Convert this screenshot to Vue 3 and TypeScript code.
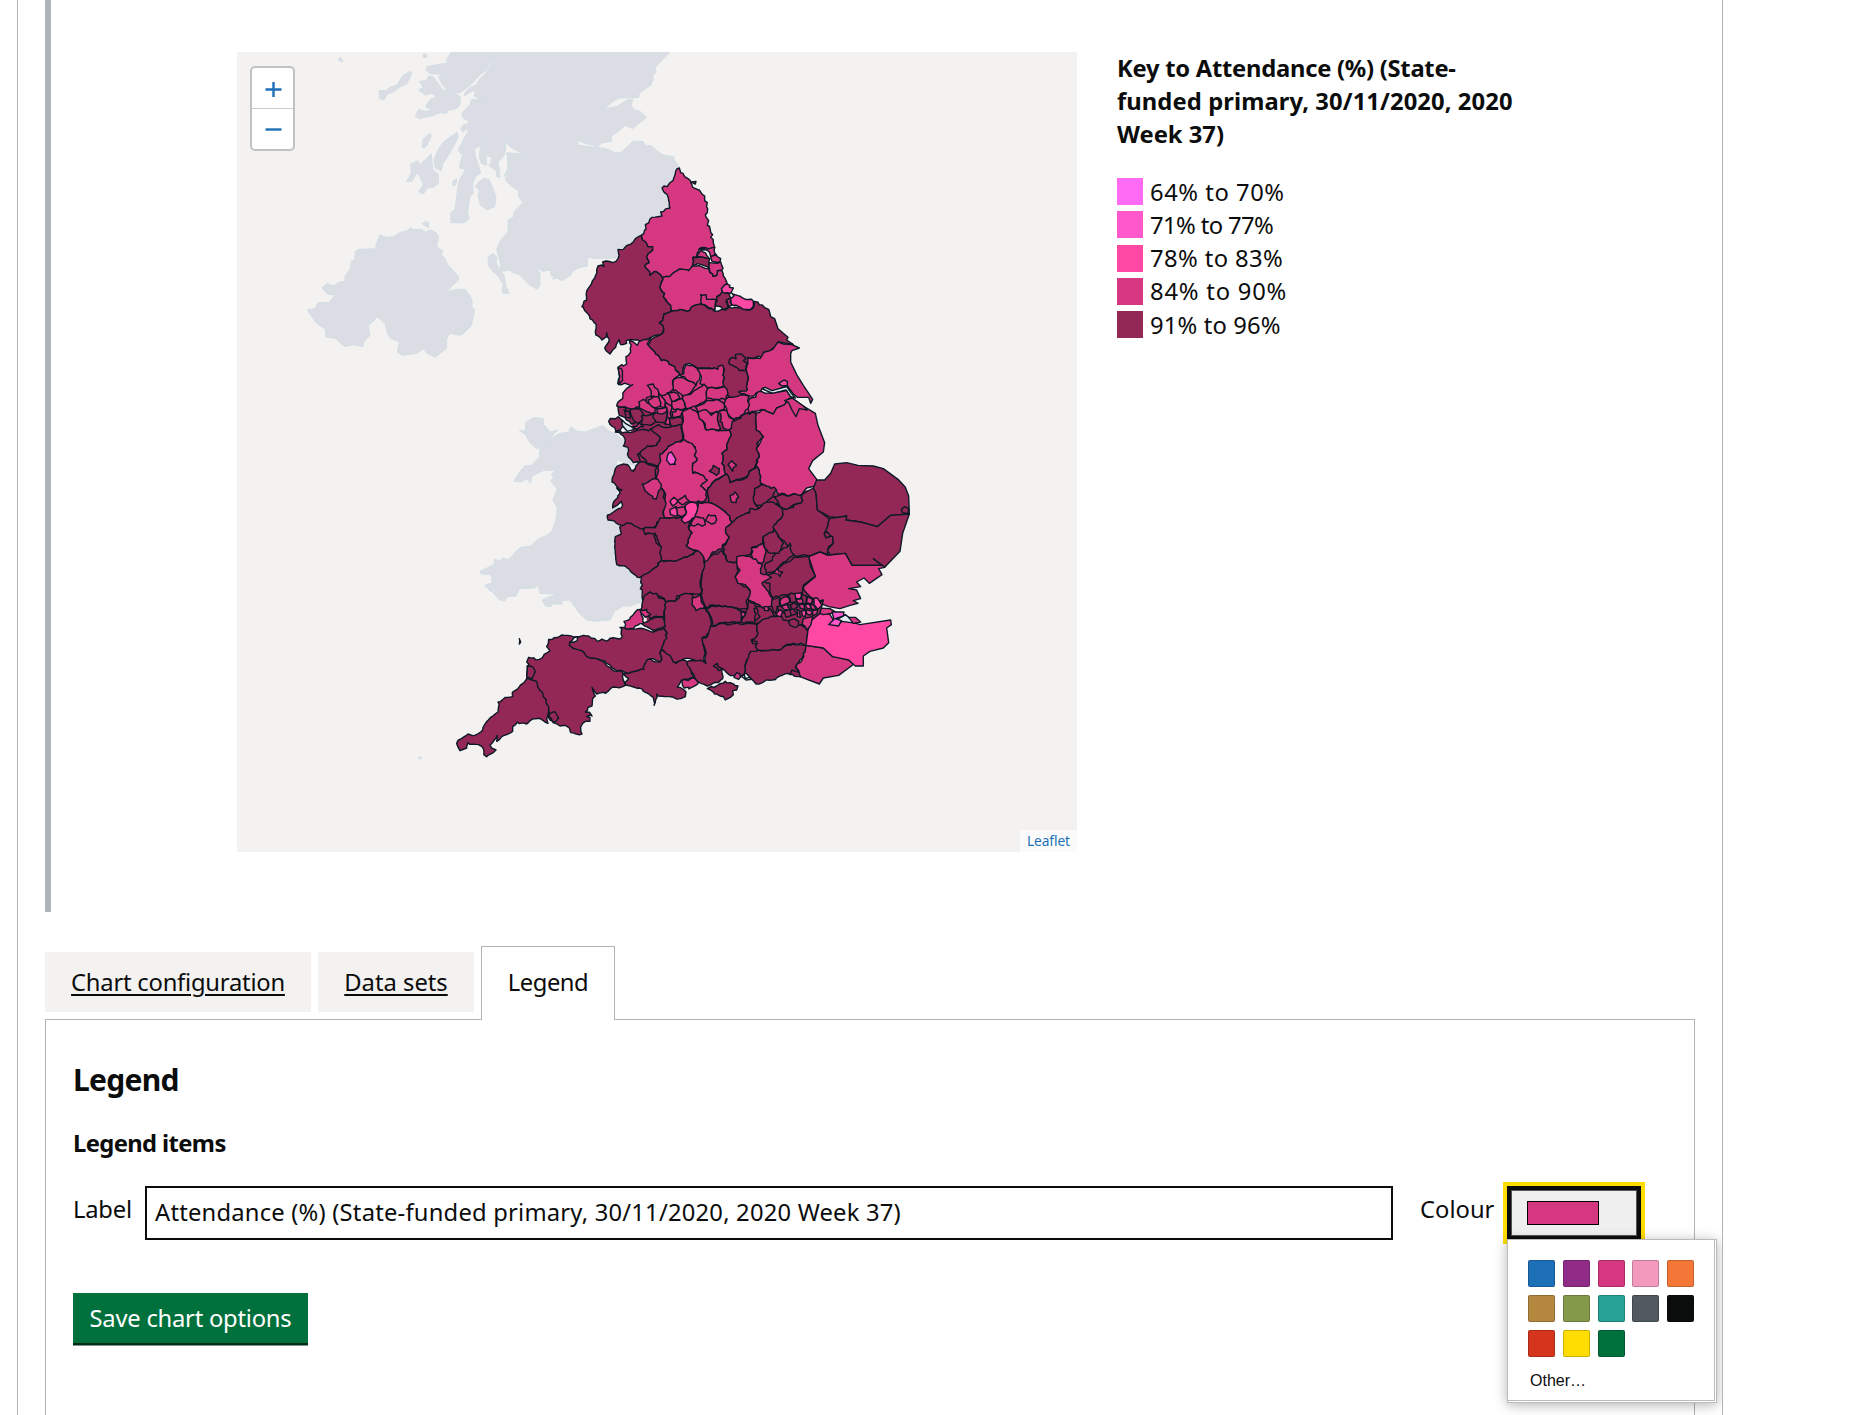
<script setup lang="ts">
import { ref } from 'vue'

type Frame = 'A' | 'B' | 'C' | 'D' | 'E' | 'F'
type Tone = 'd' | 'p' | 'h' | 'm' | 'w' | 'ud' | 'up'

/* Each map sheet is digitised at three units per pixel from its own corner. */
const origin: Record<Frame, [number, number]> = {
  A: [230, 40],
  B: [560, 150],
  C: [590, 330],
  D: [590, 440],
  E: [440, 580],
  F: [470, 400],
}
const place = (f: Frame) => `translate(${origin[f][0]} ${origin[f][1]}) scale(0.33333)`

const land: [Frame, string][] = [
  ['A', '668,30 650,58 652,70 620,74 590,80 588,92 602,101 640,104 625,110 634,128 648,148 668,152 686,160 700,152 724,132 738,118 750,104 770,90 778,70 790,50 778,84 768,98 748,118 740,134 720,142 704,160 702,168 728,152 736,155 732,168 748,176 766,178 740,178 722,180 720,196 708,206 696,220 700,236 712,240 718,250 700,254 692,268 700,276 712,264 714,276 704,290 694,312 685,328 692,342 700,336 694,356 688,384 706,386 700,400 688,420 682,450 676,506 662,518 663,548 702,549 717,536 713,514 720,470 730,460 728,430 738,408 752,400 744,370 736,350 734,326 750,318 756,302 750,330 748,350 754,370 770,376 768,346 786,352 782,368 776,376 800,394 800,410 810,412 808,388 804,366 820,350 826,332 826,300 834,314 848,326 862,332 878,342 850,340 830,338 832,352 834,386 830,410 826,420 846,440 866,452 866,468 878,488 852,516 850,532 834,540 834,576 812,600 800,628 810,664 812,694 838,690 852,700 866,702 900,736 922,748 930,736 930,700 916,682 938,694 962,690 962,704 972,712 968,718 980,714 996,722 1022,706 1028,694 1046,684 1072,678 1074,652 1098,656 1165,654 1240,600 1330,500 1320,440 1350,384 1334,362 1330,350 1296,344 1262,316 1246,318 1240,304 1208,304 1196,316 1172,338 1154,338 1134,328 1112,324 1046,316 1040,302 1060,308 1102,320 1118,308 1146,304 1144,290 1186,256 1208,266 1250,232 1230,214 1210,208 1204,196 1208,176 1190,180 1160,200 1122,206 1150,184 1168,174 1226,172 1228,160 1262,136 1270,118 1268,106 1278,98 1276,82 1320,36 1320,30'],
  ['A', '774,650 790,640 802,654 798,668 812,694 822,704 828,740 838,760 820,760 816,750 820,734 806,710 788,694 775,676'],
  ['A', '568,124 588,122 596,108 610,110 640,152 664,150 692,172 690,194 680,206 656,210 650,220 630,218 606,228 566,236 556,228 566,208 584,214 608,210 586,200 600,180 620,168 604,160 586,166 566,150 580,142'],
  ['A', '448,152 470,152 478,142 500,136 520,106 540,94 546,100 530,132 504,144 496,152 470,164 462,180 448,176'],
  ['A', '576,318 580,296 600,280 604,288 590,318 580,324'],
  ['A', '612,360 624,330 640,306 682,276 684,294 670,320 656,346 638,372 634,392 616,384'],
  ['A', '530,424 544,400 542,372 564,362 570,374 604,342 608,390 624,402 626,430 610,442 592,444 580,462 566,456 580,434 568,406 560,400 546,424'],
  ['A', '668,424 680,416 678,432 670,440'],
  ['A', '744,428 762,414 778,420 790,448 798,470 794,500 772,510 752,496 744,470 748,452 736,440'],
  ['A', '822,410 832,388 830,404'],
  ['A', '576,550 590,544 598,550 594,564'],
  ['A', '324,60 330,52 336,58 338,66'],
  ['A', '580,42 590,42 590,52 580,52'],
  ['A', '232,810 254,806 264,788 296,788 316,766 292,762 276,744 290,730 310,738 328,726 346,724 344,710 362,684 364,662 374,660 376,634 384,628 438,626 438,614 450,584 468,592 492,590 508,578 532,572 540,564 550,568 574,568 586,576 604,570 620,580 626,592 620,620 638,632 634,646 644,654 652,672 662,684 684,708 686,720 668,736 650,756 680,748 706,748 718,764 726,780 726,800 734,810 724,856 702,880 690,886 660,880 650,896 650,924 616,952 590,940 582,926 560,940 516,946 502,936 508,906 480,894 470,874 466,852 442,830 428,846 414,858 420,886 404,902 398,920 370,914 344,920 314,894 288,892 286,868 258,848'],
  ['F', '436,100 418,94 398,76 362,90 346,96 322,94 302,80 296,96 270,100 236,118 214,138 208,150 208,172 184,196 164,198 150,214 132,244 154,246 170,236 182,250 186,228 220,212 258,210 244,222 250,232 242,242 262,268 248,300 262,324 258,360 246,394 230,406 206,416 182,438 152,442 138,454 128,466 114,480 100,474 90,482 74,478 72,494 30,514 34,522 60,524 66,532 66,548 44,556 62,574 70,574 66,566 84,574 68,576 86,598 104,604 112,590 138,588 148,566 194,564 204,556 210,580 262,582 238,590 216,600 226,618 244,620 246,612 276,612 276,602 300,600 328,640 350,660 376,664 420,660 434,634 460,618 480,618 514,606 530,520 460,480 460,380 440,300 440,180 500,200 500,150'],
  ['F', '148,90 166,94 168,66 192,52 220,56 222,74 240,96 264,90 242,112 216,140 200,146 180,128 166,104'],
  ['F', '-156,1072 -148,1070 -146,1078 -152,1076'],
]

const areas: [Frame, Tone, string][] = [
  ['C', 'ud', '100,236 160,205 290,150 410,180 500,240 520,460 560,490 660,480 700,560 700,660 100,640 100,560 110,430 150,405 130,385 110,330 130,292 110,262'],
  ['C', 'up', '130,180 260,140 410,170 480,200 580,196 580,225 480,250 290,250 150,244'],
  ['D', 'ud', '110,300 110,370 170,420 170,560 230,600 340,650 640,600 650,560 690,510 680,440 720,340 740,240 680,150 560,170 420,170 240,180'],

  ['B', 'd', '244,256 248,270 258,276 264,290 278,290 278,300 264,312 260,322 268,338 254,348 270,376 288,364 308,382 304,398 300,412 306,424 314,430 310,440 318,452 332,466 334,484 312,492 308,512 298,518 310,526 306,552 280,558 262,568 244,576 234,570 212,568 198,572 200,580 182,584 178,568 158,600 150,612 138,602 134,594 146,576 140,548 134,564 126,570 106,544 108,522 66,470 80,450 80,424 104,384 114,348 132,350 128,336 156,338 174,326 174,298 190,298'],
  ['B', 'p', '358,54 374,80 384,86 398,112 412,118 434,138 434,152 442,158 442,188 436,194 446,212 442,226 458,254 452,262 464,292 430,300 418,296 410,320 398,322 398,344 386,362 370,358 344,366 328,382 306,382 288,364 270,376 254,348 268,338 260,322 264,312 278,300 278,290 264,290 258,276 248,270 244,256 254,240 256,224 276,202 306,198 302,186 330,174 328,158 306,114 312,108 322,110'],
  ['B', 'd', '394,96 408,94 406,102'],
  ['B', 'p', '308,382 328,380 344,366 370,358 386,362 398,348 410,348 446,356 458,378 470,376 472,362 486,362 502,404 488,416 488,426 470,440 464,480 440,472 424,462 404,466 380,484 360,478 336,486 332,466 310,440 314,430 306,424 300,412 304,398'],
  ['B', 'd', '334,484 360,478 380,484 404,466 424,462 440,472 464,484 484,478 498,480 506,470 550,478 574,478 584,454 626,478 632,500 644,506 654,536 684,562 680,570 700,584 656,576 654,584 630,602 612,606 606,624 564,622 562,720 540,740 510,750 490,712 492,656 484,646 472,658 414,656 388,640 374,644 370,670 358,676 344,650 324,634 304,632 284,606 262,586 280,564 308,550 308,526 298,518 308,512 312,492'],
  ['B', 'd', '506,638 516,622 528,626 526,614 544,612 558,624 550,632 562,640 562,664 538,662'],
  ['B', 'p', '418,296 464,292 470,316 452,320 440,300'],
  ['B', 'p', '410,320 422,300 436,308 448,326 430,322'],
  ['B', 'd', '398,322 430,322 450,326 448,354 424,344 398,346'],
  ['B', 'p', '452,320 468,316 482,326 480,336 456,334'],
  ['B', 'p', '448,338 482,336 486,360 472,362 468,378 458,378 448,356'],
  ['B', 'p', '422,434 438,434 440,448 468,448 464,482 424,462'],
  ['B', 'd', '488,424 506,430 512,444 498,454 504,474 490,478 468,468 470,440'],
  ['B', 'h', '484,416 500,402 510,406 508,412 520,414 512,430 488,426'],
  ['B', 'p', '500,450 514,444 510,456 518,464 506,470'],
  ['B', 'h', '516,430 580,454 574,476 550,478 520,466 512,446 522,438'],

  ['C', 'p', '118,30 130,36 142,46 154,32 184,22 172,42 194,66 214,92 234,94 254,110 268,136 248,152 252,176 234,190 214,196 180,200 150,230 128,238 80,228 106,180 128,164 86,164 84,112 110,102 108,80 122,66'],
  ['C', 'p', '84,114 94,116 98,150 88,162'],
  ['C', 'p', '172,166 190,162 206,186 208,204 184,202 184,184'],
  ['C', 'p', '268,136 282,130 288,104 316,112 330,122 330,140 318,166 290,150'],
  ['C', 'p', '250,150 268,142 290,150 318,166 300,190 280,200 250,180'],
  ['C', 'p', '322,118 384,118 384,110 400,108 398,136 402,168 354,174 330,160 334,140'],
  ['C', 'p', '276,204 320,178 342,162 354,180 350,206 318,228 290,236'],
  ['C', 'p', '354,174 404,170 412,180 410,210 378,208 350,204'],
  ['C', 'p', '402,222 414,202 450,196 478,198 476,234 462,252 432,268 410,248'],
  ['C', 'p', '474,84 510,86 520,68 548,58 564,36 580,42 606,44 628,54 606,62 602,70 602,96 620,134 640,166 668,208 662,220 656,202 622,202 610,192 598,176 592,168 546,184 520,174 510,188 478,198 446,186 472,180'],
  ['C', 'h', '566,160 582,150 592,154 592,166 576,168'],
  ['C', 'w', '516,176 526,172 546,182 590,170 604,190 616,204 600,200 588,180 548,190'],
  ['C', 'p', '480,206 514,184 546,190 590,182 604,204 590,212 584,226 560,234 550,252 524,240 496,244 478,250 474,236'],
  ['C', 'p', '498,250 524,240 550,252 560,234 584,224 596,206 606,204 640,228 676,250 684,286 704,338 700,366 668,392 656,416 680,448 684,466 650,474 636,494 570,494 552,476 520,464 508,430 498,406 506,370 500,354 520,320 498,300'],
  ['C', 'p', '584,212 606,204 640,228 652,240 628,236 618,260 606,240 596,218'],
  ['C', 'p', '276,246 300,234 324,250 340,276 346,298 418,300 424,316 410,344 412,358 396,370 402,416 410,432 378,448 352,484 330,470 350,450 336,436 308,428 308,400 318,394 316,352 280,326'],
  ['C', 'p', '316,232 350,212 380,208 402,220 402,238 386,244 350,250 324,246'],
  ['C', 'p', '324,246 350,240 364,256 380,244 392,296 350,300 340,274 328,266'],
  ['C', 'p', '386,246 402,240 418,262 436,276 418,300 400,294'],
  ['C', 'd', '436,272 464,252 498,250 498,300 520,320 500,340 506,370 496,406 470,440 420,458 402,416 396,370 412,358 410,344 424,316 418,300'],
  ['C', 'p', '414,404 426,392 440,406 428,424'],
  ['C', 'd', '358,424 370,406 388,416 380,436'],
  ['C', 'd', '276,284 278,328 250,342 210,372 212,404 180,402 142,372 156,354 200,344 210,322 182,300 206,284 240,292'],
  ['C', 'd', '76,306 140,302 182,296 210,322 200,346 172,348 142,374 152,398 130,398 116,382 114,352 100,348 106,330'],
  ['C', 'd', '84,232 106,232 128,256 136,278 124,282 104,262 88,256'],
  ['C', 'd', '56,274 84,260 104,290 78,304'],
  ['C', 'd', '120,240 150,238 164,258 144,280 130,270'],
  ['C', 'w', '94,268 106,280 124,290 134,298 112,304 98,288'],
  ['C', 'p', '128,290 148,278 160,290 140,298'],
  ['C', 'd', '154,258 196,250 200,270 182,286 156,284'],
  ['C', 'd', '102,240 118,244 122,264 108,262'],
  ['C', 'p', '146,216 160,208 180,222 196,236 186,250 160,240 148,234'],
  ['C', 'p', '174,210 206,200 212,228 196,234 182,226'],
  ['C', 'p', '206,190 226,212 224,232 210,230'],
  ['C', 'p', '232,188 262,190 270,206 246,214'],
  ['C', 'p', '246,214 276,206 288,234 262,238 246,232'],
  ['C', 'd', '190,252 230,236 226,282 198,276'],
  ['C', 'p', '226,216 246,228 238,284 226,282 232,250'],
  ['C', 'p', '200,236 230,232 226,248 204,250'],
  ['C', 'p', '246,246 262,236 284,238 272,258 250,264'],
  ['C', 'd', '236,264 274,262 276,284 244,290'],
  ['C', 'p', '210,372 250,342 280,328 306,340 318,360 318,394 308,400 308,430 340,436 352,450 332,468 350,484 342,514 300,516 290,560 222,562 226,500 218,478 200,450 206,420'],
  ['C', 'm', '232,378 244,366 258,388 256,404 240,404'],
  ['C', 'd', '66,456 76,416 100,402 118,410 130,424 150,396 180,406 206,408 196,430 204,450 216,476 220,500 228,520 220,556 226,564 200,578 182,594 150,602 120,582 86,584 54,570 54,554 94,534 94,514 68,534 70,518 90,490 80,474 96,480'],
  ['C', 'p', '156,462 180,452 204,448 214,464 206,482 198,508 170,486'],
  ['C', 'd', '352,484 378,450 410,432 420,458 464,446 498,408 508,430 520,464 494,476 492,510 506,536 478,544 470,560 426,578 408,548 384,530 356,518'],
  ['C', 'p', '420,496 434,486 446,502 438,518 424,516'],
  ['C', 'd', '494,476 520,464 560,480 550,494 520,532 500,526 490,500'],

  ['D', 'p', '324,188 356,188 384,200 408,218 426,248 410,262 408,280 418,292 398,314 396,326 368,336 358,368 344,368 340,350 318,330 288,318 302,282 300,256'],
  ['D', 'd', '210,234 252,232 296,234 302,282 288,318 320,332 290,352 250,364 214,360 212,320 200,286 160,280 156,268 200,256'],
  ['D', 'h', '240,184 252,172 264,182 248,198'],
  ['D', 'p', '262,182 276,174 286,166 298,184 276,194'],
  ['D', 'h', '240,208 258,200 262,228 242,224'],
  ['D', 'p', '256,200 284,200 290,216 274,230 262,224'],
  ['D', 'h', '274,240 290,216 286,196 304,186 320,190 322,210 316,234 284,250'],
  ['D', 'p', '302,256 316,230 340,234 346,254'],
  ['D', 'p', '346,242 356,224 376,226 380,240 364,252'],
  ['D', 'd', '92,258 110,248 150,266 162,268 166,284 196,280 198,308 214,320 214,362 186,390 180,406 142,412 112,384 80,374 74,320 76,290 94,282'],
  ['D', 'd', '418,292 408,280 408,262 426,248 440,234 478,220 480,206 506,206 520,190 552,188 578,208 576,232 552,256 552,270 520,290 518,310 484,324 480,344 450,348 440,366 412,364 398,318'],
  ['D', 'd', '636,164 670,144 678,150 682,210 718,236 712,262 704,280 728,290 730,310 716,320 712,344 690,336 660,348 612,344 590,314 576,300 556,272 552,256 576,232 578,208 560,190 590,208 638,182'],
  ['D', 'd', '552,170 636,162 638,182 608,196 590,208 568,196'],
  ['D', 'd', '670,144 680,120 704,120 722,100 734,72 770,68 804,76 850,78 880,86 924,118 946,142 956,168 958,222 902,226 862,260 812,246 768,240 770,228 740,232 718,230 682,210 678,160'],
  ['D', 'd', '718,236 770,228 768,240 812,246 862,260 902,226 958,222 938,280 930,334 884,382 850,356 876,376 786,376 766,340 720,344 712,330 730,310 728,290 704,280 712,262'],
  ['D', 'd', '934,208 944,200 956,206 954,220 938,218'],
  ['D', 'd', '702,280 712,276 722,288 708,294'],
  ['D', 'p', '656,350 690,336 714,346 766,340 786,376 876,376 884,382 866,386 876,404 838,430 822,414 800,426 812,440 776,446 800,450 812,476 790,482 804,490 780,496 750,506 716,500 690,490 660,470 640,440 676,410'],
  ['D', 'd', '540,430 520,420 548,400 570,380 612,352 656,350 662,380 676,408 640,436 636,462 580,464 548,474 540,450'],
  ['D', 'd', '524,376 548,350 580,324 600,310 612,346 570,376 548,396 528,400'],
  ['D', 'd', '520,290 552,268 580,310 566,340 544,340 524,324'],
  ['D', 'p', '548,398 562,384 578,396 570,410'],
  ['D', 'd', '334,430 342,372 370,342 398,330 412,364 440,366 444,390 436,410 444,430 470,440 482,462 470,480 472,506 440,504 404,498 346,500 334,466'],
  ['D', 'p', '440,350 460,346 484,352 516,372 512,400 544,412 530,420 516,430 530,450 548,476 546,498 520,506 484,484 472,478 480,450 466,434 444,430 436,410 450,390 440,372'],
  ['D', 'p', '484,328 520,308 528,336 516,370 488,356'],
  ['D', 'd', '154,410 186,390 216,362 250,364 290,352 324,332 340,350 344,376 330,430 334,460 300,460 260,468 254,484 226,486 200,460 180,456 158,480'],
  ['D', 'd', '226,486 254,484 270,466 290,460 306,462 310,500 346,504 350,514 364,550 360,576 340,590 346,670 300,656 256,670 214,628 230,576 220,560 224,540'],
  ['D', 'p', '306,474 332,460 334,486 344,500 318,512 306,494'],
  ['D', 'd', '158,484 164,466 180,456 200,460 206,474 228,486 222,530 180,536 152,510'],
  ['D', 'p', '102,544 152,508 160,550 130,566 104,566'],
  ['D', 'p', '150,512 170,508 182,524 166,532'],
  ['D', 'd', '156,552 180,540 218,532 226,560 190,572'],
  ['D', 'd', '346,504 404,498 440,506 460,514 454,546 390,548 370,556'],
  ['D', 'd', '454,548 474,504 476,480 496,500 540,506 556,530 540,540 502,550'],
  ['D', 'p', '452,520 462,514 466,524 458,534'],
  ['D', 'd', '492,506 500,504 510,530 494,544'],
  ['D', 'p', '522,500 534,500 536,512 524,512'],

  ['E', 'd', '412,170 374,166 326,178 320,200 330,212 298,238 266,232 262,258 260,290 276,300 296,326 310,370 326,390 330,420 360,438 376,436 388,444 392,458 426,462 428,430 450,424 440,410 456,408 436,396 456,378 466,348 456,322 470,342 496,340 510,328 556,316 550,280 510,262 470,236 434,220 388,190'],
  ['E', 'd', '388,196 390,186 412,182 412,170 446,168 472,184 544,174 540,142 560,148 610,146 640,156 672,146 682,160 664,208 660,246 640,236 622,242 612,268 560,280 524,268 500,250 470,236 440,230 434,220'],
  ['E', 'd', '260,296 276,300 290,304 310,350 326,380 324,430 310,422 280,416 260,432 232,426 218,440 218,454 200,464 170,484 172,466 156,490 150,496 168,510 140,530 132,516 126,500 84,488 80,504 60,512 50,490 64,476 84,462 104,466 128,450 152,412 174,396 174,366 196,352 218,350 220,334 258,300'],
  ['E', 'd', '262,258 280,262 286,276 276,296 260,294'],
  ['E', 'd', '328,402 346,396 356,414 340,428'],
  ['E', 'd', '238,176 242,186 238,192'],
  ['E', 'd', '550,282 612,268 622,238 640,244 660,246 664,210 690,226 708,250 734,240 760,258 754,280 760,296 724,302 712,322 738,336 736,350 722,356 650,342 642,376 640,352 596,324 556,316 566,296'],
  ['E', 'd', '740,246 780,240 798,250 796,208 786,174 804,166 812,138 840,130 950,134 954,160 934,180 954,210 920,240 914,282 900,292 860,278 846,266 848,296 802,318 768,300 754,274'],
  ['E', 'p', '726,300 744,302 760,294 776,308 760,320 732,324'],
  ['E', 'd', '820,258 832,250 848,266 836,272'],
  ['E', 'p', '882,292 890,278 900,282 896,298'],
  ['E', 'w', '906,290 912,282 916,296 928,292 936,298 918,300'],
  ['E', 'd', '802,326 830,318 856,304 894,318 890,330 878,332 880,344 856,360'],
  ['E', 'd', '950,134 990,110 1030,106 1104,150 1100,194 1060,190 1004,210 954,212 946,200 950,184 934,180 954,160'],
  ['E', 'd', '918,250 930,216 1004,210 1060,192 1098,196 1086,236 1066,262 1076,284 1050,282 948,312 930,292 914,280'],
  ['E', 'p', '1098,196 1150,204 1178,230 1216,234 1242,252 1196,286 1150,294 1138,312 1080,290 1068,262 1086,240'],
  ['E', 'd', '1050,284 1056,270 1076,276 1082,290'],
  ['E', 'h', '1118,112 1140,96 1170,104 1190,136 1214,118 1260,134 1352,120 1354,134 1340,144 1346,188 1330,204 1290,214 1270,228 1270,258 1246,258 1226,240 1178,230 1150,204 1098,196 1104,150'],
  ['E', 'p', '1130,84 1170,86 1190,98 1150,104 1124,94'],
  ['E', 'w', '1186,122 1216,104 1250,130 1206,124'],
  ['E', 'm', '1166,134 1182,118 1176,96 1212,96 1210,108 1186,116 1204,122 1196,138'],
  ['E', 'p', '1226,112 1246,112 1262,126 1240,130'],

  ['D', 'd', '546,478 570,474 572,500 556,520 548,504'],
  ['D', 'd', '560,500 700,480 690,520 640,560 580,540'],
  ['D', 'p', '572,478 590,470 600,486 574,498'],
  ['D', 'd', '594,466 616,462 620,486 602,488'],
  ['D', 'h', '614,460 634,458 632,474 616,476'],
  ['D', 'p', '618,478 636,474 638,490 624,490'],
  ['D', 'd', '636,464 650,468 648,490 638,490'],
  ['D', 'p', '652,470 668,478 664,492 650,488'],
  ['D', 'h', '672,474 682,474 696,496 684,508 672,494'],
  ['D', 'p', '660,492 672,496 680,512 664,506'],
  ['D', 'h', '646,494 658,492 664,508 650,504'],
  ['D', 'h', '648,510 668,514 660,526 650,520'],
  ['D', 'p', '668,512 684,508 680,522 668,528'],
  ['D', 'p', '640,536 668,530 662,556 650,570 636,552'],
  ['D', 'h', '634,514 648,510 646,530 638,528'],
  ['D', 'd', '596,546 612,536 626,544 618,562 600,556'],
  ['D', 'p', '574,500 592,492 600,506 584,510'],
  ['D', 'h', '558,526 570,510 584,516 572,530'],
  ['D', 'd', '580,516 600,508 606,526 588,532'],
  ['D', 'd', '600,512 612,502 620,522 604,526'],
  ['D', 'p', '620,508 630,512 632,532 622,530'],
  ['D', 'd', '600,496 614,488 624,500 606,506'],
  ['D', 'p', '628,492 642,494 644,508 630,504'],
]

/* Smooth value noise sampled at map position, so neighbouring edges bend together. */
const lattice = (i: number, j: number, s: number) => {
  const v = Math.sin(i * 127.1 + j * 311.7 + s * 74.7) * 43758.5453
  return (v - Math.floor(v)) * 2 - 1
}
const noise = (x: number, y: number, s: number) => {
  const i = Math.floor(x / 3)
  const j = Math.floor(y / 3)
  const u = x / 3 - i
  const v = y / 3 - j
  const top = lattice(i, j, s) * (1 - u) + lattice(i + 1, j, s) * u
  const low = lattice(i, j + 1, s) * (1 - u) + lattice(i + 1, j + 1, s) * u
  return top * (1 - v) + low * v
}

/* Long inland boundary edges are broken up into the small wiggles of a real border. */
function fray(f: Frame, pts: string): string {
  const p = pts.split(' ').map(s => s.split(',').map(Number))
  const out: string[] = []
  p.forEach(([x, y], n) => {
    const [x2, y2] = p[(n + 1) % p.length]
    out.push(`${x},${y}`)
    const steps = Math.floor(Math.hypot(x2 - x, y2 - y) / 8)
    for (let k = 1; k < steps; k++) {
      const mx = x + ((x2 - x) * k) / steps
      const my = y + ((y2 - y) * k) / steps
      const gx = origin[f][0] + mx / 3
      const gy = origin[f][1] + my / 3
      if (gx > 805 || (gx > 770 && gy < 460)) continue
      out.push(`${(mx + noise(gx, gy, 1) * 6).toFixed(1)},${(my + noise(gx, gy, 2) * 6).toFixed(1)}`)
    }
  })
  return out.join(' ')
}
const counties = areas.map(([f, tone, pts]) => ({
  tone,
  points: tone === 'ud' || tone === 'up' || tone === 'w' ? pts : fray(f, pts),
  at: place(f),
}))

const keyItems = [
  { label: '64% to 70%', colour: '#ff6bf4', cls: 'a' },
  { label: '71% to 77%', colour: '#ff58cc', cls: 'b' },
  { label: '78% to 83%', colour: '#ff47a4', cls: 'c' },
  { label: '84% to 90%', colour: '#d53880', cls: 'e' },
  { label: '91% to 96%', colour: '#932856', cls: 'f' },
]
const palette = [
  '#1d70b8', '#912b88', '#d53880', '#f499be', '#f47738',
  '#b58840', '#85994b', '#28a197', '#505a5f', '#0b0c0c',
  '#d4351c', '#ffdd00', '#00703c',
]
const seriesLabel = ref('Attendance (%) (State-funded primary, 30/11/2020, 2020 Week 37)')
</script>

<template>
  <main class="sheet">
    <section class="preview">
      <div class="map">
        <svg class="map-art" viewBox="237 52 840 800" width="840" height="800">
          <polygon v-for="(l, i) in land" :key="'l' + i" class="land" :points="l[1]" :transform="place(l[0])" />
          <polygon v-for="(c, i) in counties" :key="'a' + i" :class="['area', c.tone]" :points="c.points" :transform="c.at" />
        </svg>
        <div class="zoom">
          <button type="button" aria-label="Zoom in">
            <svg width="17" height="17" viewBox="0 0 17 17"><path d="M0.5 8.5H16.5M8.5 1V16" /></svg>
          </button>
          <button type="button" aria-label="Zoom out">
            <svg width="17" height="17" viewBox="0 0 17 17"><path d="M0.5 8.5H16.5" /></svg>
          </button>
        </div>
        <a class="credit">Leaflet</a>
      </div>
      <aside class="key">
        <h3><span class="k1">Key to Attendance (%) (State-</span><br><span class="k2">funded primary, 30/11/2020, 2020</span><br><span>Week 37)</span></h3>
        <ul>
          <li v-for="k in keyItems" :key="k.label"><i :style="{ background: k.colour }"></i><span :class="'k-' + k.cls">{{ k.label }}</span></li>
        </ul>
      </aside>
    </section>

    <nav class="tabs">
      <a class="tab t1"><span>Chart configuration</span></a>
      <a class="tab t2"><span>Data sets</span></a>
      <a class="tab active">Legend</a>
    </nav>

    <section class="panel">
      <h2>Legend</h2>
      <h3>Legend items</h3>
      <div class="row">
        <label class="lab" for="series">Label</label>
        <input id="series" v-model="seriesLabel" type="text">
        <span class="col">Colour</span>
        <div class="picker">
          <button class="current" type="button" aria-label="Colour"><i></i></button>
          <div class="popup">
            <div class="swatches">
              <i v-for="c in palette" :key="c" :style="{ background: c }"></i>
            </div>
            <span class="other">Other…</span>
          </div>
        </div>
      </div>
      <button class="save" type="button">Save chart options</button>
    </section>
  </main>
</template>

<style>
body {
  margin: 0;
  background: #fff;
  overflow: hidden;
}
</style>

<style scoped>
* {
  box-sizing: border-box;
}
.sheet {
  width: 1706px;
  height: 1415px;
  margin-left: 17px;
  padding: 0 27px;
  border: solid #b1b4b6;
  border-width: 0 1px;
  display: flex;
  flex-direction: column;
  overflow: hidden;
  font: 23.75px/33px "Noto Sans", "Open Sans", sans-serif;
  color: #0b0c0c;
}
h2, h3, ul {
  margin: 0;
  padding: 0;
}
.preview {
  flex: none;
  height: 912px;
  border-left: 6px solid #b1b4b6;
  padding: 52px 0 0 186px;
  display: flex;
  align-items: flex-start;
}
.map {
  position: relative;
  width: 840px;
  height: 800px;
  background: #f3f2f1;
}
.map-art {
  display: block;
}
.land {
  fill: #dadde4;
  stroke: #d2dfe5;
  stroke-width: 3;
}
.area {
  stroke: #0b1a26;
  stroke-width: 4.2;
  stroke-linejoin: round;
}
.d { fill: #932856; }
.p { fill: #d53880; }
.h { fill: #ff47a4; }
.m { fill: #ff58cc; }
.w { fill: #dde9ee; }
.ud { fill: #932856; stroke: none; }
.up { fill: #d53880; stroke: none; }
.zoom {
  position: absolute;
  left: 13px;
  top: 14px;
  width: 45px;
  height: 85px;
  border: 2px solid #c2c1c0;
  border-radius: 5px;
  background: #fff;
  display: flex;
  flex-direction: column;
}
.zoom button {
  height: 40px;
  padding: 2px 0 0 2px;
  border: 0;
  background: none;
  display: flex;
  align-items: center;
  justify-content: center;
}
.zoom button + button {
  height: 41px;
  border-top: 1px solid #ccc;
  padding-top: 0;
}
.zoom path {
  fill: none;
  stroke: #1d70b8;
  stroke-width: 2.4;
}
.credit {
  position: absolute;
  right: 0;
  bottom: 0;
  width: 57px;
  height: 22px;
  background: rgba(255, 255, 255, 0.7);
  font: 13.75px/21px "Noto Sans", sans-serif;
  letter-spacing: -0.1px;
  text-align: center;
  color: #1d70b8;
}
.key {
  margin-left: 40px;
  width: 420px;
}
.key h3 {
  font-size: 23.75px;
  line-height: 33px;
  font-weight: 700;
  white-space: nowrap;
}
.k1 { letter-spacing: -0.25px; }
.k2 { letter-spacing: 0.1px; }
.key ul {
  list-style: none;
  margin-top: 24px;
}
.key li {
  height: 33.25px;
  line-height: 32px;
  display: flex;
  align-items: center;
}
.k-a { letter-spacing: 0.55px; }
.k-b { letter-spacing: -0.6px; }
.k-c { letter-spacing: 0.4px; }
.k-e { letter-spacing: 0.8px; }
.k-f { letter-spacing: 0.15px; }
.key i {
  width: 26px;
  height: 27px;
  margin-right: 7px;
}
.tabs {
  flex: none;
  margin-top: 34px;
  height: 73px;
  display: flex;
  align-items: flex-start;
  gap: 7px;
}
.tab {
  height: 60px;
  margin-top: 6px;
  line-height: 61px;
  background: #f3f2f1;
  text-align: center;
  white-space: nowrap;
}
.tab span {
  text-decoration: underline;
  text-decoration-thickness: 1.5px;
  text-underline-offset: 3px;
}
.t1 {
  width: 266px;
  letter-spacing: -0.22px;
}
.t2 { width: 156px; }
.active {
  position: relative;
  width: 134px;
  height: 74px;
  margin-top: 0;
  line-height: 71px;
  letter-spacing: -0.45px;
  background: #fff;
  border: 1px solid #b1b4b6;
  border-bottom: 0;
}
.panel {
  flex: 1;
  border: 1px solid #b1b4b6;
  border-bottom: 0;
  padding: 40px 0 0 27px;
  display: flex;
  flex-direction: column;
  align-items: flex-start;
}
.panel h2 {
  font-size: 30px;
  line-height: 40px;
  letter-spacing: -0.7px;
}
.panel h3 {
  margin-top: 27px;
  font-size: 23.75px;
  line-height: 33px;
  letter-spacing: -0.6px;
}
.row {
  margin-top: 26px;
  display: flex;
  align-items: flex-start;
}
.lab, .col {
  line-height: 33px;
  padding-top: 7px;
  white-space: nowrap;
}
.lab {
  width: 72px;
  letter-spacing: -0.2px;
}
input {
  width: 1248px;
  height: 54px;
  padding: 0 8px 2px;
  border: 2px solid #0b0c0c;
  font: inherit;
  letter-spacing: 0.21px;
  color: inherit;
  outline: none;
}
.col {
  width: 87px;
  margin-left: 27px;
}
.picker {
  position: relative;
}
.current {
  display: flex;
  align-items: center;
  width: 134px;
  height: 54px;
  padding: 0 0 0 16px;
  border: 4px solid #0b0c0c;
  background: #efefef;
  box-shadow: 0 0 0 4px #fd0, inset 0 0 0 1px #555;
}
.current i {
  width: 72px;
  height: 24px;
  border: 1px solid #000;
  background: #d53880;
}
.popup {
  position: absolute;
  left: 0;
  top: 53px;
  width: 210px;
  height: 164px;
  padding: 20px;
  background: #fff;
  border: 1px solid #bbb;
  border-right: 3px double #bbb;
  border-bottom: 3px double #bbb;
  box-shadow: 0 2px 12px rgba(0, 0, 0, 0.3);
}
.swatches {
  display: grid;
  grid-template-columns: repeat(5, 27px);
  gap: 8px 7.8px;
}
.swatches i {
  height: 27px;
  border: 1px solid rgba(0, 0, 0, 0.2);
  border-radius: 2px;
}
.other {
  display: block;
  margin: 14px 0 0 2px;
  font: 16px/20px "Liberation Sans", Arial, sans-serif;
}
.save {
  margin-top: 53px;
  width: 235px;
  height: 50px;
  padding: 0;
  border: 0;
  background: #00703c;
  box-shadow: 0 2.5px 0 #002d18;
  color: #fff;
  font: inherit;
  letter-spacing: -0.23px;
}
</style>
